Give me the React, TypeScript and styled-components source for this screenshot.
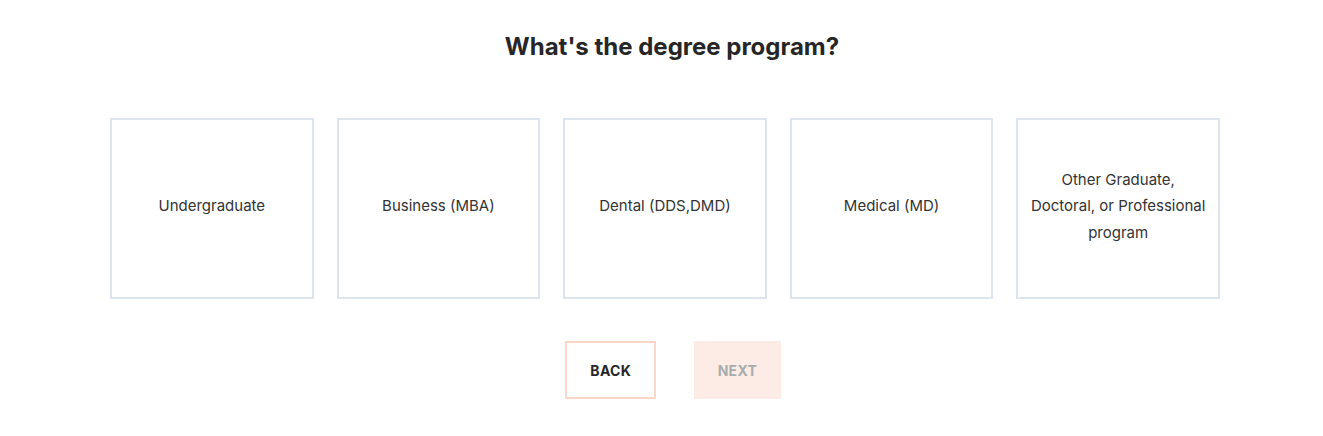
import styled, { createGlobalStyle } from 'styled-components';

const GlobalStyle = createGlobalStyle`
  body {
    margin: 0;
    background: #ffffff;
    font-family: Inter, "Liberation Sans", sans-serif;
    color: #2b2b2b;
  }
`;

const Page = styled.div`
  width: 1124px;
  padding: 30px 0 0 110px;
  display: flex;
  flex-direction: column;
  align-items: center;
`;

const Title = styled.h1`
  margin: 0;
  font-size: 24px;
  line-height: 34px;
  font-weight: 700;
  color: #262626;
`;

const Options = styled.div`
  align-self: flex-start;
  display: flex;
  gap: 23px;
  margin-top: 54px;
`;

const Option = styled.button`
  width: 203.6px;
  height: 181px;
  box-sizing: border-box;
  border: 2px solid #dde5ee;
  background: #ffffff;
  padding: 0 12px 4px;
  display: flex;
  align-items: center;
  justify-content: center;
  text-align: center;
  font-family: inherit;
  font-size: 15px;
  line-height: 26.5px;
  color: #333333;
  cursor: pointer;
`;

const Actions = styled.div`
  display: flex;
  gap: 38px;
  margin-top: 42px;
  padding-left: 2px;
`;

const NavButton = styled.button<{ $disabled?: boolean }>`
  height: 58px;
  box-sizing: border-box;
  padding: ${(p) => (p.$disabled ? '0 23.5px' : '0 23px')};
  border: ${(p) => (p.$disabled ? 'none' : '2px solid #fcd6c6')};
  background: ${(p) => (p.$disabled ? '#fdece6' : '#ffffff')};
  color: ${(p) => (p.$disabled ? '#a9acae' : '#262626')};
  font-family: inherit;
  font-size: 14px;
  font-weight: 700;
  letter-spacing: 0.3px;
  cursor: ${(p) => (p.$disabled ? 'default' : 'pointer')};
`;

const programs = [
  'Undergraduate',
  'Business (MBA)',
  'Dental (DDS,DMD)',
  'Medical (MD)',
  'Other Graduate, Doctoral, or Professional program',
];

export default function App() {
  return (
    <>
      <GlobalStyle />
      <Page>
        <Title>What's the degree program?</Title>
        <Options>
          {programs.map((p) => (
            <Option key={p}>{p}</Option>
          ))}
        </Options>
        <Actions>
          <NavButton>BACK</NavButton>
          <NavButton $disabled>NEXT</NavButton>
        </Actions>
      </Page>
    </>
  );
}
